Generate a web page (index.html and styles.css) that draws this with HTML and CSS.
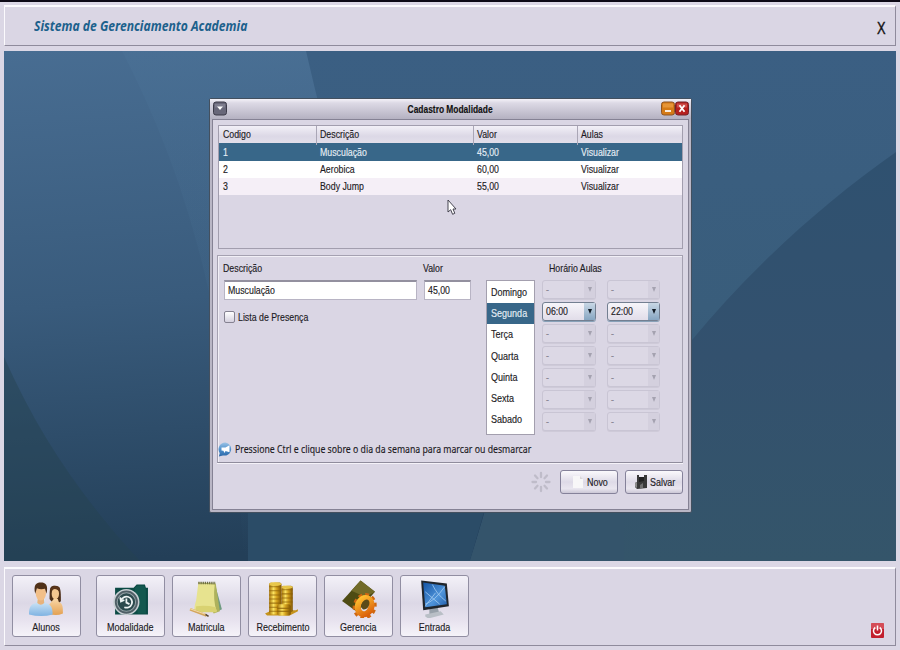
FILE: index.html
```html
<!DOCTYPE html>
<html lang="pt-BR">
<head>
<meta charset="utf-8">
<title>Sistema de Gerenciamento Academia</title>
<link rel="stylesheet" href="styles.css">
</head>
<body>
<header class="panel top">
  <h1 class="brand"><span class="t">Sistema de Gerenciamento Academia</span></h1>
  <span class="exit">X</span>
</header>

<main class="desktop">
  <svg class="wall" viewBox="0 0 892 510" preserveAspectRatio="none">
    <defs>
      <linearGradient id="w" x1="0" y1="0" x2=".12" y2="1"><stop offset="0" stop-color="#486d92"/><stop offset=".5" stop-color="#395b7c"/><stop offset="1" stop-color="#233f58"/></linearGradient>
      <linearGradient id="w1" x1="0" y1="0" x2="0" y2="1"><stop offset="0" stop-color="#3b5f83"/><stop offset=".5" stop-color="#395d7b"/><stop offset="1" stop-color="#345570"/></linearGradient>
      <linearGradient id="w2" x1="0" y1="0" x2="0" y2="1"><stop offset="0" stop-color="#2f5170"/><stop offset=".5" stop-color="#33516e"/><stop offset="1" stop-color="#34556a"/></linearGradient>
      <linearGradient id="w3" x1="0" y1="0" x2="0" y2="1"><stop offset="0" stop-color="#5580a6" stop-opacity=".14"/><stop offset=".7" stop-color="#4c7799" stop-opacity=".1"/><stop offset="1" stop-color="#4c7799" stop-opacity="0"/></linearGradient>
    </defs>
    <rect width="892" height="510" fill="url(#w)"/>
    <path d="M118 0H320V510H240C225 270 185 130 118 0Z" fill="url(#w3)"/>
    <path d="M302 0H892V510H466L484 450L340 150Q318 70 302 0Z" fill="url(#w1)"/>
    <path d="M892 101C815 155 745 220 688 289L600 420L560 510H892Z" fill="url(#w2)"/>
    <path d="M0 306C35 385 80 450 136 510H0Z" fill="#264350" opacity=".45"/>
    <path d="M244 440H486L466 510H244Z" fill="#2b4c67"/>
    <path d="M488 440H620V510H466Z" fill="#34546b"/>
  </svg>

  <section class="window">
    <div class="titlebar">
      <svg class="wbtn" viewBox="0 0 14 14"><rect x=".5" y=".5" width="13" height="13" rx="2.5" fill="#686779" stroke="#3c3b49"/><path d="M2 2.5H12V6H2Z" fill="#8d8c9c" opacity=".6"/><path d="M4 5H10L7 8.5Z" fill="#fff"/></svg>
      <b class="wtitle"><span class="t">Cadastro Modalidade</span></b>
      <svg class="wbtn" viewBox="0 0 14 14"><rect x=".5" y=".5" width="13" height="13" rx="2.5" fill="#d57a16" stroke="#8d5424"/><path d="M2 2H12V6H2Z" fill="#efa44c" opacity=".65"/><path d="M4 9.5H10" stroke="#fff" stroke-width="1.7"/></svg>
      <svg class="wbtn" viewBox="0 0 14 14"><rect x=".5" y=".5" width="13" height="13" rx="2.5" fill="#b5201e" stroke="#742228"/><path d="M2 2H12V6H2Z" fill="#d86461" opacity=".65"/><path d="M4.500 3.700L9.500 10.300M9.500 3.700L4.500 10.300" stroke="#fff" stroke-width="1.800"/></svg>
    </div>
    <div class="body">
      <div class="table">
        <div class="row head"><span><i class="t">Codigo</i></span><span><i class="t">Descrição</i></span><span><i class="t">Valor</i></span><span><i class="t">Aulas</i></span></div>
        <div class="row sel"><span><i class="t">1</i></span><span><i class="t">Musculação</i></span><span><i class="t">45,00</i></span><span><i class="t">Visualizar</i></span></div>
        <div class="row"><span><i class="t">2</i></span><span><i class="t">Aerobica</i></span><span><i class="t">60,00</i></span><span><i class="t">Visualizar</i></span></div>
        <div class="row alt"><span><i class="t">3</i></span><span><i class="t">Body Jump</i></span><span><i class="t">55,00</i></span><span><i class="t">Visualizar</i></span></div>
      </div>

      <div class="form">
        <div class="fields">
          <div class="left">
            <div class="pair">
              <label class="desc"><i class="t">Descrição</i><span class="input"><i class="t">Musculação</i></span></label>
              <label class="val"><i class="t">Valor</i><span class="input"><i class="t">45,00</i></span></label>
            </div>
            <div class="check"><span class="box"></span><i class="t">Lista de Presença</i></div>
          </div>
          <ul class="days">
            <li><i class="t">Domingo</i></li><li class="on"><i class="t">Segunda</i></li><li><i class="t">Terça</i></li><li><i class="t">Quarta</i></li><li><i class="t">Quinta</i></li><li><i class="t">Sexta</i></li><li><i class="t">Sabado</i></li>
          </ul>
          <div class="hours">
            <div class="htitle"><i class="t">Horário Aulas</i></div>
            <div class="combos">
              <span class="combo"><i class="t">-</i><b></b></span><span class="combo"><i class="t">-</i><b></b></span>
              <span class="combo act"><i class="t">06:00</i><b></b></span><span class="combo act"><i class="t">22:00</i><b></b></span>
              <span class="combo"><i class="t">-</i><b></b></span><span class="combo"><i class="t">-</i><b></b></span>
              <span class="combo"><i class="t">-</i><b></b></span><span class="combo"><i class="t">-</i><b></b></span>
              <span class="combo"><i class="t">-</i><b></b></span><span class="combo"><i class="t">-</i><b></b></span>
              <span class="combo"><i class="t">-</i><b></b></span><span class="combo"><i class="t">-</i><b></b></span>
              <span class="combo"><i class="t">-</i><b></b></span><span class="combo"><i class="t">-</i><b></b></span>
            </div>
          </div>
        </div>
        <div class="hint">
          <svg width="15" height="15" viewBox="0 0 15 15"><defs><linearGradient id="h" x1="0" y1="0" x2="0" y2="1"><stop offset="0" stop-color="#9bc3e6"/><stop offset=".5" stop-color="#4f90cb"/><stop offset="1" stop-color="#2b67a8"/></linearGradient></defs><path d="M7.500.5A6.900 6.600 0 1 1 5 13.500L.8 14.600L1.800 11.200A6.800 6.800 0 0 1 7.500.5Z" fill="url(#h)"/><path d="M3.500 5.600L7.500 5.400L11.500 3.300V10.200L7.500 8.900L6.500 10.900L5.400 8.800L3.500 8.500Z" fill="#fff"/></svg>
          <span class="t">Pressione Ctrl e clique sobre o dia da semana para marcar ou desmarcar</span>
        </div>
      </div>

      <div class="actions">
        <svg class="spin" width="20" height="22" viewBox="-10 -11 20 22" stroke="#bfbcc9" stroke-width="2.300" stroke-linecap="round"><path d="M0-5V-9M0 5V9M-5 0H-8.500M5 0H8.500M-3.500-3.800L-6-6.500M3.500-3.800L6-6.500M-3.500 3.800L-6 6.500M3.500 3.800L6 6.500"/></svg>
        <span class="btn novo"><svg width="12" height="14" viewBox="0 0 12 14"><path d="M1 1H8L11 4V13H1Z" fill="#f8f7f8"/><path d="M8 1V4H11Z" fill="#d9d7db"/></svg><i class="t">Novo</i></span>
        <span class="btn salvar"><svg width="14" height="16" viewBox="0 0 14 16"><path d="M3 1H5V3H10V1H13V14L3 15L1 13V9L3 8Z" fill="#3a3a3a"/><path d="M5 3H10V7L5 8Z" fill="#222"/><path d="M6 11L9 9V14L6 14.500Z" fill="#707070"/><path d="M1 9L3 8V14L1 12.500Z" fill="#8c8c8c"/></svg><i class="t">Salvar</i></span>
      </div>
    </div>
  </section>

  <svg class="cursor" width="10" height="17" viewBox="0 0 10 17"><path d="M1 1V13L3.700 10.700L5.600 15.300L7.800 14.300L6 10H9Z" fill="#fff" stroke="#34333f" stroke-width=".9"/></svg>
</main>

<footer class="panel dock">
  <div class="tool first">
    <svg viewBox="0 0 36 36"><defs><linearGradient id="a1" x1="0" y1="0" x2="0" y2="1"><stop offset="0" stop-color="#e3f2fb"/><stop offset="1" stop-color="#7fb3e2"/></linearGradient><linearGradient id="a2" x1="0" y1="0" x2="0" y2="1"><stop offset="0" stop-color="#f8d6a6"/><stop offset="1" stop-color="#e4a152"/></linearGradient></defs>
      <path d="M21 18C21 7 21 5 26.500 5S32 9 32 20C30 24 24 23 21 18Z" fill="#4d2f18"/><ellipse cx="26.600" cy="13" rx="3.600" ry="5.500" fill="#f3c790"/><path d="M25 18H29L30 21C34 22 34 27 34 32Q27 35 20 32V24Z" fill="url(#a2)"/><path d="M22.500 10C24 8 28 7 30.500 11L31 7L26 5L22 8Z" fill="#5b3519"/>
      <path d="M9 17H16L17 22C23 23 24 28 24 33Q13 36 1 33C1 27 2 23 8 22Z" fill="url(#a1)"/><path d="M9.500 17H15.500L15.800 22Q12.500 25 9 22Z" fill="#e7b27b"/><ellipse cx="12.500" cy="12.500" rx="5" ry="7" fill="#f2bf88"/><path d="M7 13C5 4 8 2 12.500 2S20 4 18 13L16.500 8Q12 9 8.700 7.500Z" fill="#503118"/></svg>
    <i class="t">Alunos</i>
  </div>
  <div class="tool">
    <svg viewBox="0 0 36 36"><path d="M3 7H21L24 4H32L33 7H35V33H3Z" fill="#0c4b45"/><path d="M22 7L25 5H31L33 9V32H25Z" fill="#13584f"/><circle cx="14" cy="21" r="12" fill="#4f5f66" stroke="#c7ced2" stroke-width="1.500"/><circle cx="14" cy="21" r="9" fill="#2c4a4d" stroke="#93a2a6"/><path d="M8.800 20A5.400 5.400 0 1 1 12 26M8 16.500L8.700 20.500L12 19M14 17.500V21.500L17 23" fill="none" stroke="#edf3f3" stroke-width="1.700"/></svg>
    <i class="t">Modalidade</i>
  </div>
  <div class="tool">
    <svg viewBox="0 0 36 36"><path d="M26 3L33 28L27 31Z" fill="#6f9b81"/><path d="M10 2L27 3L31 30L25 32Z" fill="#aeb25c"/><path d="M10 3L26 4Q24 20 28 30L7 30Q5 29 8 19Z" fill="#e7e38f"/><path d="M8 25Q18 24 27 26L28 31H7Z" fill="#d9d271"/><path d="M10 2.500H27" stroke="#6e6e43" stroke-width="2.400" stroke-dasharray="1.300 .8"/><path d="M2 28L18 34" stroke="#d3a65e" stroke-width="2.600"/><path d="M2 27.400L18 33.200" stroke="#f4dca8"/><path d="M17 33L20 35" stroke="#554430" stroke-width="1.500"/></svg>
    <i class="t">Matricula</i>
  </div>
  <div class="tool">
    <svg viewBox="0 0 36 36"><defs><linearGradient id="g"><stop offset="0" stop-color="#a67308"/><stop offset=".35" stop-color="#fbe260"/><stop offset=".6" stop-color="#d6a31e"/><stop offset="1" stop-color="#7e5303"/></linearGradient></defs><path d="M1 32L8 29H31L33 28V30L25 34H3Z" fill="#c5931c"/><rect x="5" y="2" width="12" height="31" rx="2" fill="url(#g)"/><rect x="17" y="5" width="11" height="26" rx="2" fill="url(#g)"/><path d="M5 6H17M5 10H17M5 14H17M5 18H17M5 22H17M5 26H17M5 30H17M17 9H28M17 13H28M17 17H28M17 21H28" stroke="#8d6108" stroke-width="1" opacity=".75"/><rect x="13" y="23" width="13" height="11" rx="2" fill="url(#g)"/><path d="M13 27H26M13 30H26" stroke="#8d6108"/><ellipse cx="11" cy="3.500" rx="6" ry="1.700" fill="#e8c74b"/><ellipse cx="22.500" cy="6.500" rx="5.500" ry="1.500" fill="#e6c44a"/></svg>
    <i class="t">Recebimento</i>
  </div>
  <div class="tool">
    <svg viewBox="0 0 36 36"><defs><linearGradient id="o" x1="0" y1="0" x2="1" y2="1"><stop offset="0" stop-color="#ffc331"/><stop offset="1" stop-color="#d95b08"/></linearGradient></defs><path d="M20 0L34 11L17 31L2 20Z" fill="#4e4b13"/><path d="M20 0L34 11L25 16L11 10Z" fill="#716a28"/><ellipse cx="24" cy="25" rx="9.500" ry="11" fill="none" stroke="#cf6710" stroke-width="4" stroke-dasharray="3.500 2.900" transform="rotate(20 24 25)"/><ellipse cx="24" cy="25" rx="6.500" ry="8" fill="none" stroke="url(#o)" stroke-width="6" transform="rotate(20 24 25)"/><ellipse cx="24.500" cy="23" rx="3.600" ry="5.200" fill="#5b4b18" transform="rotate(28 24 23.500)"/></svg>
    <i class="t">Gerencia</i>
  </div>
  <div class="tool">
    <svg viewBox="0 0 36 36"><defs><linearGradient id="s" x1="0" y1="0" x2="1" y2="1"><stop offset="0" stop-color="#1454a4"/><stop offset=".6" stop-color="#4f94da"/><stop offset="1" stop-color="#205da9"/></linearGradient></defs><path d="M13 27L21 26L23 33H13Z" fill="#98a1aa"/><path d="M9 33L24 30L27 33L12 37L9 35Z" fill="#b9bfc6"/><path d="M5 0L30 3L32 25L7 29Z" fill="#20252b"/><path d="M7 2L28 5L30 23L9 26Z" fill="url(#s)"/><path d="M9 23Q18 20 28 6M16 4Q20 13 29 20M9 11L23 23M9 25L19 12" fill="none" stroke="#acd2f4" stroke-width=".9" opacity=".8"/></svg>
    <i class="t">Entrada</i>
  </div>
  <svg class="power" width="13" height="15" viewBox="0 0 13 15"><rect width="13" height="15" rx="1" fill="#c2202e"/><path d="M0 0H13V6H0Z" fill="#df6c73" opacity=".6"/><path d="M4.300 4.500A4 4 0 1 0 8.700 4.500M6.500 2.500V7.500" fill="none" stroke="#fff" stroke-width="1.500"/></svg>
</footer>
</body>
</html>
```

FILE: styles.css
```css
* { box-sizing: border-box; }

body {
  margin: 0;
  height: 650px;
  overflow: hidden;
  display: flex;
  flex-direction: column;
  padding: 3px 4px 4px;
  border-top: 2px solid #0d0916;
  background: #dbd7e5;
  color: #1d1b24;
  font: 10.5px/14px "Liberation Sans", Arial, sans-serif;
}

i { font-style: normal; }

/* condensed lettering */
.t {
  display: inline-block;
  white-space: nowrap;
  transform: translateY(-1px) scaleX(.837);
  transform-origin: 0 50%;
  -webkit-text-stroke: .15px currentColor;
}

.panel {
  display: flex;
  background: #dad6e4;
  border: 1px solid #8f8b9c;
  border-top: 2px solid #fbfafd;
  border-left: 1px solid #fbfafd;
}

.top {
  height: 41px;
  justify-content: space-between;
  padding: 0 10px 0 29px;
}

.brand {
  margin: 10px 0 0;
  height: 18px;
  color: #1c618c;
  font: italic bold 13.5px/18px "Noto Sans", sans-serif;
}
.brand .t { transform: scaleX(.898); -webkit-text-stroke: 0; }

.exit {
  margin-top: 12px;
  width: 9px;
  color: #111;
  font: 16px/20px "Liberation Sans", sans-serif;
  -webkit-text-stroke: .4px #111;
  transform: scaleX(.8);
}

.desktop {
  position: relative;
  height: 510px;
  margin: 5px 0 6px;
  flex: none;
}
.wall { display: block; width: 100%; height: 100%; }

.window {
  position: absolute;
  left: 205px;
  top: 47px;
  width: 483px;
  height: 415px;
  padding: 0 2px 2px;
  border: 1px solid #43505f;
  border-radius: 2px;
  background: #b9b6c5;
}

.titlebar {
  display: flex;
  align-items: center;
  height: 20px;
  margin: 0 -2px;
  padding: 0 2px 1px 3px;
  background: linear-gradient(#f4f2f8, #dcd9e5 20%, #b4b1c1);
}
.wbtn { width: 14px; height: 15px; flex: none; }
.wtitle { flex: 1; text-align: center; color: #111; padding-left: 12px; padding-top: 3px; }
.wtitle .t { transform: translateY(-1px) scaleX(.8); transform-origin: 50% 50%; }

.body {
  height: 391px;
  padding: 5px 5px 0 5px;
  border: 1px solid #858294;
  background: #dad6e4;
}

.table {
  height: 124px;
  margin: 0 0 6px 0;
  border: 1px solid #a29eae;
}
.row {
  display: grid;
  grid-template-columns: 97px 157px 104px 1fr;
  height: 17px;
  line-height: 17px;
  background: #fff;
}
.row span { padding-left: 4px; }
.head { height: 17px; line-height: 19px; background: linear-gradient(#f2f0f7, #dcd8e6 60%, #e2dfea); }
.head span + span { padding-left: 3px; border-left: 1px solid #aaa6b6; }
.sel { height: 18px; line-height: 20px; background: #386789; color: #e6eef5; }
.row:not(.head):not(.sel) { line-height: 18px; }
.alt { background: #f5eff7; }

.form {
  height: 208px;
  margin: 0 0 0 -1px;
  border: 1px solid #a5a1b1;
  border-bottom-color: #8f8c9c;
  box-shadow: inset 1px 1px #f1eff6, 0 1px #f4f2f8;
}
.fields { display: flex; height: 186px; }
.left { width: 268px; padding: 6px 0 0 5px; }
.pair { display: flex; gap: 6px; }
.pair label { display: flex; flex-direction: column; gap: 4px; }
.desc { width: 194px; }
.val { width: 48px; }
.pair label > .t { margin-left: -.5px; margin-right: .5px; }
.input {
  height: 20px;
  padding: 2px 2.500px;
  margin-left: 1px;
  border: 1px solid #b8b4c4;
  border-top: 2px solid #93909f;
  background: #fff;
}
.check { display: flex; align-items: center; gap: 3px; margin: 11px 0 0 1px; }
.box {
  width: 11px;
  height: 12px;
  margin-top: -2px;
  border: 1px solid #858291;
  border-radius: 2px;
  background: linear-gradient(#fff, #d5d1df);
}

.days {
  width: 49px;
  height: 155px;
  margin: 24px 0 0;
  padding: 1px 0 0;
  list-style: none;
  border: 1px solid #a39fae;
  background: #fff;
}
.days li { height: 21.200px; padding-left: 3.500px; line-height: 22px; }
.days .t { transform: translateY(-1px) scaleX(.86); }
.days .on { background: #386789; color: #e6eef5; }

.hours { padding: 6px 0 0 7px; }
.htitle { height: 18px; padding-left: 7px; }
.combos {
  display: grid;
  grid-template-columns: 54px 53px;
  gap: 3px 11px;
}
.combo {
  display: flex;
  justify-content: space-between;
  height: 19px;
  padding-left: 3px;
  line-height: 18px;
  border: 1px solid #c9c5d4;
  border-radius: 3px;
  background: #dcd8e5;
  box-shadow: 0 1px #cecad8;
  color: #8b8896;
}
.combo b {
  display: flex;
  width: 11px;
  align-items: center;
  justify-content: center;
  background: #d4d0de;
}
.combo b::before {
  content: "";
  border: 2.500px solid transparent;
  border-top: 5px solid #a5a2b0;
  border-bottom: 0;
}
.act {
  border-color: #737f91;
  background: linear-gradient(#f6f5fa, #e1dde9);
  color: #1d1b24;
  box-shadow: 0 1px #88a1b8;
}
.act b { background: linear-gradient(#c8d7e5, #87a6c2); }
.act b::before { border-top-color: #111a24; }

.hint {
  display: flex;
  align-items: center;
  gap: 2px;
  height: 16px;
  margin-top: -1px;
  font: 10.500px/16px "Noto Sans", sans-serif;
}
.hint svg { flex: none; }
.hint .t { transform: scaleX(.83); }

.actions {
  display: flex;
  align-items: center;
  justify-content: flex-end;
  height: 24px;
  margin: 7px 0 0 0;
}
.spin { margin-right: 9px; }
.btn {
  display: flex;
  align-items: center;
  width: 58px;
  height: 24px;
  border: 1px solid #85829a;
  border-radius: 3px;
  background: linear-gradient(#faf9fc, #dedae7 50%, #e9e6ef 80%, #cbc7d6);
}
.btn .t { transform: scaleX(.85); }
.novo { padding-left: 11px; gap: 3px; margin-right: 7px; }
.salvar { padding-left: 8px; gap: 2px; }

.cursor { position: absolute; left: 443px; top: 148px; }

.dock {
  height: 79px;
  padding: 6px 11px 0 7px;
  gap: 7px;
  border-color: #fbfafd #8f8b9c #8f8b9c #fbfafd;
}
.tool {
  display: flex;
  flex-direction: column;
  align-items: center;
  width: 69px;
  height: 62px;
  padding-top: 4px;
  border: 1px solid #918ea2;
  border-radius: 3px;
  background: linear-gradient(#f3f1f8, #dcd8e6 45%, #e8e3ef 75%, #f5f3f9);
}
.tool.first { margin-right: 8px; }
.tool svg { width: 37px; height: 38px; }
.tool .t { margin-top: 3px; transform: translateY(-1px) scaleX(.857); transform-origin: 50% 50%; }
.power { margin: 47px 0 0 auto; transform: translateY(1px); }
```
